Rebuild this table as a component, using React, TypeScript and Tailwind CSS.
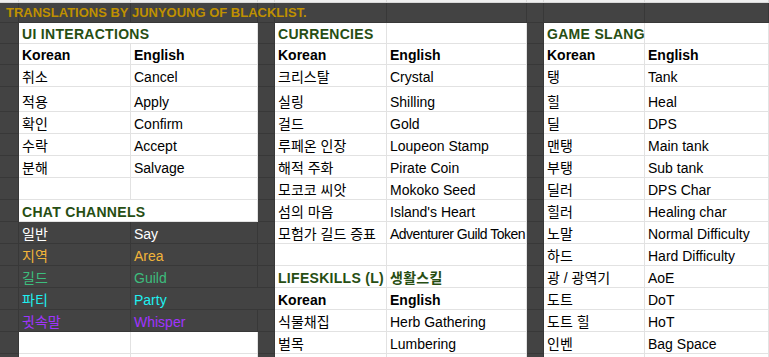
import type { ReactNode } from "react";

type Kind = "sec" | "hdr" | "txt" | "chat" | "blank";

interface Cell {
    t?: string;
    k?: Kind;
    color?: string; // text colour for chat rows
    merge?: boolean; // hide right gridline (merged cell)
    tight?: boolean; // long text that just fits its column
}

interface Row {
    h: string;
    cells: Cell[]; // B, C, E, F, H, I
}

const W = [
    "w-[19px]",
    "w-[112px]",
    "w-[127px]",
    "w-[17px]",
    "w-[112px]",
    "w-[140px]",
    "w-[17px]",
    "w-[101px]",
    "flex-1",
];

const sec = (t: string, merge = false): Cell => ({ t, k: "sec", merge });
const hdr = (t: string): Cell => ({ t, k: "hdr" });
const txt = (t: string, tight = false): Cell => ({ t, k: "txt", tight });
const chat = (t: string, color: string, merge = false): Cell => ({ t, k: "chat", color, merge });
const blank: Cell = { k: "blank" };

const rows: Row[] = [
    { h: "h-[21px]", cells: [sec("UI INTERACTIONS", true), blank, sec("CURRENCIES"), blank, sec("GAME SLANG"), blank] },
    { h: "h-[21px]", cells: [hdr("Korean"), hdr("English"), hdr("Korean"), hdr("English"), hdr("Korean"), hdr("English")] },
    { h: "h-[22px]", cells: [txt("취소"), txt("Cancel"), txt("크리스탈"), txt("Crystal"), txt("탱"), txt("Tank")] },
    { h: "h-[25px]", cells: [txt("적용"), txt("Apply"), txt("실링"), txt("Shilling"), txt("힐"), txt("Heal")] },
    { h: "h-[22px]", cells: [txt("확인"), txt("Confirm"), txt("걸드"), txt("Gold"), txt("딜"), txt("DPS")] },
    { h: "h-[22px]", cells: [txt("수락"), txt("Accept"), txt("루페온 인장"), txt("Loupeon Stamp"), txt("맨탱"), txt("Main tank")] },
    { h: "h-[22px]", cells: [txt("분해"), txt("Salvage"), txt("해적 주화"), txt("Pirate Coin"), txt("부탱"), txt("Sub tank")] },
    { h: "h-[22px]", cells: [blank, blank, txt("모코코 씨앗"), txt("Mokoko Seed"), txt("딜러"), txt("DPS Char")] },
    { h: "h-[22px]", cells: [sec("CHAT CHANNELS", true), blank, txt("섬의 마음"), txt("Island's Heart"), txt("힐러"), txt("Healing char")] },
    { h: "h-[22px]", cells: [chat("일반", "#ffffff"), chat("Say", "#ffffff"), txt("모험가 길드 증표"), txt("Adventurer Guild Token", true), txt("노말"), txt("Normal Difficulty")] },
    { h: "h-[22px]", cells: [chat("지역", "#f1b43a"), chat("Area", "#f1b43a"), blank, blank, txt("하드"), txt("Hard Difficulty")] },
    { h: "h-[22px]", cells: [chat("길드", "#3dbd7d"), chat("Guild", "#3dbd7d"), sec("LIFESKILLS (L)"), sec("생활스킬"), txt("광 / 광역기"), txt("AoE")] },
    { h: "h-[22px]", cells: [chat("파티", "#1ef0f0"), chat("Party", "#1ef0f0", true), hdr("Korean"), hdr("English"), txt("도트"), txt("DoT")] },
    { h: "h-[22px]", cells: [chat("귓속말", "#a033ff"), chat("Whisper", "#a033ff"), txt("식물채집"), txt("Herb Gathering"), txt("도트 힐"), txt("HoT")] },
    { h: "h-[22px]", cells: [blank, blank, txt("벌목"), txt("Lumbering"), txt("인벤"), txt("Bag Space")] },
    { h: "h-[22px]", cells: [blank, blank, blank, blank, blank, blank] },
];

function DarkCell({ w }: { w: string }) {
    return <div className={`${w} h-full shrink-0 bg-[#434343] border-r border-b border-[#383838]`} />;
}

function DataCell({ w, cell }: { w: string; cell: Cell }) {
    const dark = cell.k === "chat";
    let content: ReactNode = null;
    if (cell.t) {
        if (cell.k === "sec") {
            content = <span className="relative z-10 font-bold text-[#274e13] tracking-[0.3px]">{cell.t}</span>;
        } else if (cell.k === "hdr") {
            content = <span className="font-bold text-black">{cell.t}</span>;
        } else if (cell.k === "chat") {
            content = <span style={{ color: cell.color }}>{cell.t}</span>;
        } else {
            content = (
                <span className={`relative z-10 text-black ${cell.tight ? "tracking-[-0.5px]" : ""}`}>{cell.t}</span>
            );
        }
    }
    return (
        <div
            className={`${w} shrink-0 flex items-end px-[3px] pb-[1px] whitespace-nowrap overflow-visible border-b ${
                cell.merge ? "" : "border-r"
            } ${dark ? "bg-[#434343] border-[#383838]" : "bg-white border-[#e2e2e2]"}`}
        >
            {content}
        </div>
    );
}

function SheetRow({ row }: { row: Row }) {
    const [b, c, e, f, hh, i] = row.cells;
    return (
        <div className={`flex ${row.h}`}>
            <DarkCell w={W[0]} />
            <DataCell w={W[1]} cell={b} />
            <DataCell w={W[2]} cell={c} />
            <DarkCell w={W[3]} />
            <DataCell w={W[4]} cell={e} />
            <DataCell w={W[5]} cell={f} />
            <DarkCell w={W[6]} />
            <DataCell w={W[7]} cell={hh} />
            <DataCell w={W[8]} cell={i} />
        </div>
    );
}

export default function App() {
    return (
        <div className="w-[769px] h-[357px] overflow-hidden bg-white font-['Liberation_Sans','Noto_Sans_CJK_KR',sans-serif] text-[14px] leading-4">
            {/* sliver of the row above */}
            <div className="flex h-[3px]">
                {W.map((w, idx) => (
                    <div key={idx} className={`${w} shrink-0 bg-[#efefef] border-r border-b border-[#d9d9d9]`} />
                ))}
            </div>
            {/* title row */}
            <div className="flex h-[20px]">
                {W.map((w, idx) => (
                    <div
                        key={idx}
                        className={`${w} shrink-0 flex items-end pb-[1px] bg-[#434343] border-r border-b border-[#383838] whitespace-nowrap overflow-visible`}
                    >
                        {idx === 0 && (
                            <span className="relative z-10 pl-[6px] text-[13px] font-bold text-[#bf9000]">
                                TRANSLATIONS BY JUNYOUNG OF BLACKLIST.
                            </span>
                        )}
                    </div>
                ))}
            </div>
            {rows.map((row, idx) => (
                <SheetRow key={idx} row={row} />
            ))}
        </div>
    );
}
